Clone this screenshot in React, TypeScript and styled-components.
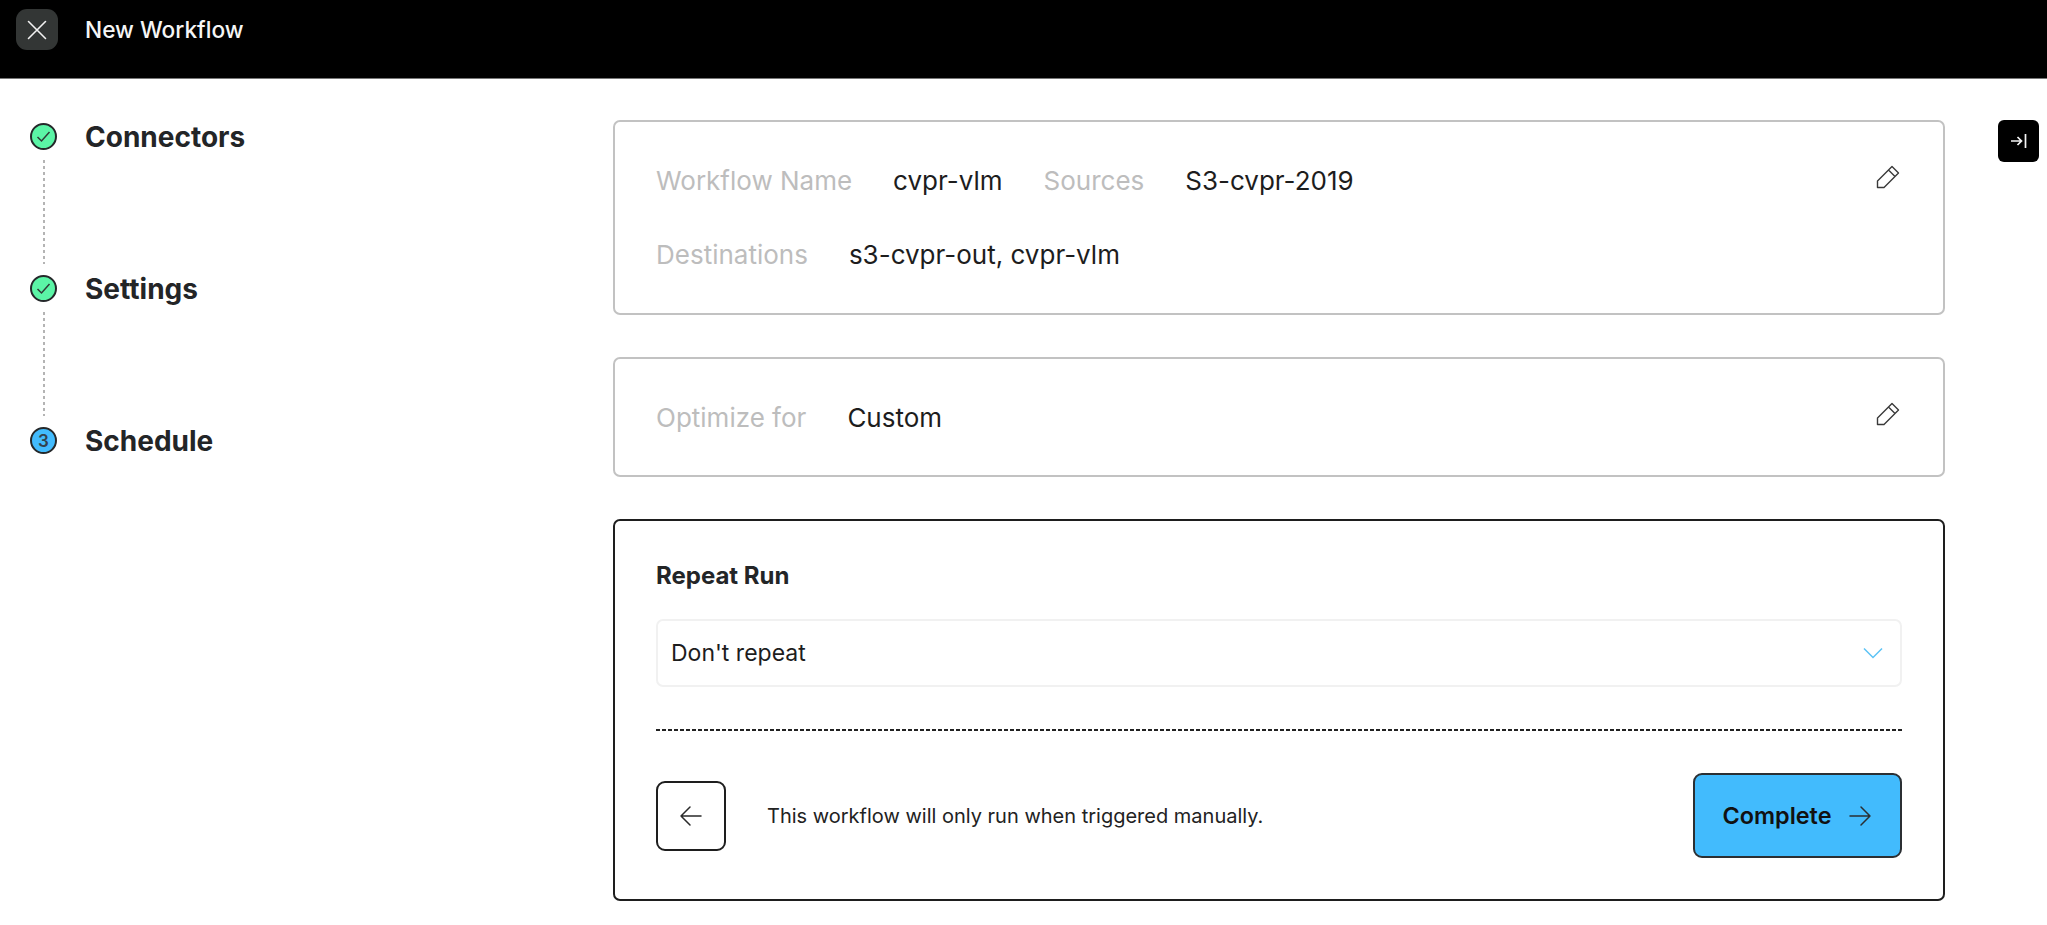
import styled, { createGlobalStyle } from 'styled-components'

const GlobalStyle = createGlobalStyle`
  html, body {
    margin: 0;
    padding: 0;
    background: #fff;
    font-family: Inter, "Liberation Sans", sans-serif;
    color: #1f2123;
  }
`

export default function App() {
  return (
    <Page>
      <GlobalStyle />
      <Header>
        <CloseButton aria-label="close">
          <svg width="24" height="24" viewBox="0 0 24 24" fill="none" stroke="#f2f2f2" strokeWidth="1.6" strokeLinecap="round">
            <path d="M3.5 3.5 20.5 20.5M20.5 3.5 3.5 20.5" />
          </svg>
        </CloseButton>
        <HeaderTitle>New Workflow</HeaderTitle>
      </Header>
      <Body>
        <Sidebar>
          <Step>
            <StepDot $bg="#5bf5a6">
              <CheckIcon />
            </StepDot>
            <StepLabel>Connectors</StepLabel>
          </Step>
          <Connector />
          <Step>
            <StepDot $bg="#5bf5a6">
              <CheckIcon />
            </StepDot>
            <StepLabel>Settings</StepLabel>
          </Step>
          <Connector />
          <Step>
            <StepDot $bg="#42bbfd">3</StepDot>
            <StepLabel>Schedule</StepLabel>
          </Step>
        </Sidebar>
        <Content>
          <SummaryCard $height={195}>
            <SummaryRows>
              <SummaryRow>
                <Field>
                  <FieldLabel>Workflow Name</FieldLabel>
                  <FieldValue>cvpr-vlm</FieldValue>
                </Field>
                <Field>
                  <FieldLabel>Sources</FieldLabel>
                  <FieldValue>S3-cvpr-2019</FieldValue>
                </Field>
              </SummaryRow>
              <SummaryRow>
                <Field>
                  <FieldLabel>Destinations</FieldLabel>
                  <FieldValue>s3-cvpr-out, cvpr-vlm</FieldValue>
                </Field>
              </SummaryRow>
            </SummaryRows>
            <PencilIcon />
          </SummaryCard>
          <SummaryCard $height={120}>
            <SummaryRows>
              <SummaryRow>
                <Field>
                  <FieldLabel>Optimize for</FieldLabel>
                  <FieldValue>Custom</FieldValue>
                </Field>
              </SummaryRow>
            </SummaryRows>
            <PencilIcon />
          </SummaryCard>
          <ScheduleCard>
            <SectionTitle>Repeat Run</SectionTitle>
            <SelectBox>
              <span>Don't repeat</span>
              <svg width="22" height="14" viewBox="0 0 22 14" fill="none" stroke="#5cc3f5" strokeWidth="1.5">
                <path d="M2 2.5 11 11.5 20 2.5" />
              </svg>
            </SelectBox>
            <Divider />
            <Footer>
              <BackButton aria-label="back">
                <svg width="24" height="24" viewBox="0 0 24 24" fill="none" stroke="#2a2a2a" strokeWidth="1.5" strokeLinecap="round" strokeLinejoin="round">
                  <path d="M22 12H2M11 3 2 12l9 9" />
                </svg>
              </BackButton>
              <Hint>This workflow will only run when triggered manually.</Hint>
              <CompleteButton>
                Complete
                <svg width="24" height="24" viewBox="0 0 24 24" fill="none" stroke="#2a2f33" strokeWidth="1.5" strokeLinecap="round" strokeLinejoin="round">
                  <path d="M2 12h20M13 3l9 9-9 9" />
                </svg>
              </CompleteButton>
            </Footer>
          </ScheduleCard>
        </Content>
        <Gutter>
          <CollapseButton aria-label="collapse">
            <svg width="18" height="16" viewBox="0 0 18 16" fill="none" stroke="#f5f5f5" strokeWidth="1.7">
              <path d="M1 8h10M7.5 4l4 4-4 4M15.5 1v14" />
            </svg>
          </CollapseButton>
        </Gutter>
      </Body>
    </Page>
  )
}

function CheckIcon() {
  return (
    <svg width="15" height="13" viewBox="0 0 15 13" fill="none" stroke="#2f3a36" strokeWidth="1.5">
      <path d="M1.5 7 5.5 11 13.5 2" />
    </svg>
  )
}

function PencilIcon() {
  return (
    <PencilSvg viewBox="0 0 24 24" fill="none" stroke="#3a3a3a" strokeWidth="1.4" strokeLinejoin="round">
      <path d="M1.5 22.5V16L16 1.5 22.5 8 8 22.5ZM12.5 5 19 11.5" />
    </PencilSvg>
  )
}

const Page = styled.div`
  width: 2047px;
  height: 925px;
  overflow: hidden;
`

const Header = styled.header`
  display: flex;
  align-items: center;
  gap: 27px;
  box-sizing: border-box;
  height: 79px;
  padding: 0 0 19px 16px;
  background: #000;
  border-bottom: 1px solid #777;
`

const CloseButton = styled.button`
  display: flex;
  align-items: center;
  justify-content: center;
  width: 42px;
  height: 41px;
  padding: 0;
  border: none;
  border-radius: 11px;
  background: #333635;
`

const HeaderTitle = styled.h1`
  margin: 0;
  font-size: 22.7px;
  font-weight: 500;
  line-height: 30px;
  color: #f5f5f5;
`

const Body = styled.main`
  display: flex;
  align-items: flex-start;
  padding-top: 41px;
`

const Sidebar = styled.nav`
  display: flex;
  flex-direction: column;
  box-sizing: border-box;
  width: 613px;
  padding: 3px 0 0 30px;
`

const Step = styled.div`
  display: flex;
  align-items: center;
  gap: 28px;
  height: 27px;
`

const StepDot = styled.span<{ $bg: string }>`
  display: flex;
  align-items: center;
  justify-content: center;
  box-sizing: border-box;
  width: 27px;
  height: 27px;
  flex: none;
  border: 2px solid #25282a;
  border-radius: 50%;
  background: ${p => p.$bg};
  font-size: 17px;
  font-weight: 600;
  color: #33424d;
`

const StepLabel = styled.span`
  font-size: 28px;
  font-weight: 700;
  line-height: 32px;
  color: #232527;
`

const Connector = styled.div`
  width: 2px;
  height: 104px;
  margin: 10px 0 11px 13px;
  background: repeating-linear-gradient(180deg, #b4b4b4 0 3px, transparent 3px 6px);
`

const Content = styled.section`
  display: flex;
  flex-direction: column;
  gap: 42px;
  width: 1332px;
  flex: none;
`

const SummaryCard = styled.div<{ $height: number }>`
  display: flex;
  align-items: flex-start;
  justify-content: space-between;
  box-sizing: border-box;
  height: ${p => p.$height}px;
  padding: 41px 43px 0 41px;
  border: 2px solid #c2c2c2;
  border-radius: 7px;
`

const SummaryRows = styled.div`
  display: flex;
  flex-direction: column;
  gap: 38px;
`

const SummaryRow = styled.div`
  display: flex;
  gap: 41px;
`

const Field = styled.div`
  display: flex;
  gap: 41px;
  font-size: 26px;
  line-height: 36px;
`

const FieldLabel = styled.span`
  color: #bdbdbd;
`

const FieldValue = styled.span`
  color: #1d1d1d;
`

const PencilSvg = styled.svg`
  width: 24px;
  height: 24px;
  flex: none;
  margin-top: 2px;
`

const ScheduleCard = styled.div`
  display: flex;
  flex-direction: column;
  box-sizing: border-box;
  height: 382px;
  padding: 41px 41px 0;
  border: 2px solid #1e1e1e;
  border-radius: 7px;
`

const SectionTitle = styled.h2`
  margin: 0 0 29px;
  font-size: 24px;
  font-weight: 700;
  line-height: 28px;
  color: #232527;
`

const SelectBox = styled.div`
  display: flex;
  align-items: center;
  justify-content: space-between;
  box-sizing: border-box;
  height: 68px;
  padding: 0 16px 0 13px;
  border: 2px solid #f1f1f1;
  border-radius: 7px;
  font-size: 23px;
  color: #1d1d1d;
`

const Divider = styled.div`
  height: 2px;
  margin-top: 42px;
  background: repeating-linear-gradient(90deg, #222 0 4px, transparent 4px 6px);
`

const Footer = styled.div`
  display: flex;
  align-items: center;
  margin-top: 42px;
`

const BackButton = styled.button`
  display: flex;
  align-items: center;
  justify-content: center;
  box-sizing: border-box;
  width: 70px;
  height: 70px;
  padding: 0;
  border: 2px solid #1e1e1e;
  border-radius: 9px;
  background: #fff;
`

const Hint = styled.p`
  flex: 1;
  margin: 0 0 0 41px;
  font-size: 20px;
  line-height: 28px;
  color: #222;
`

const CompleteButton = styled.button`
  display: flex;
  align-items: center;
  justify-content: center;
  gap: 17px;
  box-sizing: border-box;
  width: 209px;
  height: 85px;
  padding: 0;
  border: 2px solid #2b2f33;
  border-radius: 9px;
  background: #42bbfd;
  font-family: inherit;
  font-size: 23.4px;
  font-weight: 600;
  color: #111;
`

const Gutter = styled.aside`
  display: flex;
  flex: none;
  padding-left: 53px;
`

const CollapseButton = styled.button`
  display: flex;
  align-items: center;
  justify-content: center;
  width: 41px;
  height: 42px;
  padding: 0;
  border: none;
  border-radius: 6px;
  background: #000;
`
